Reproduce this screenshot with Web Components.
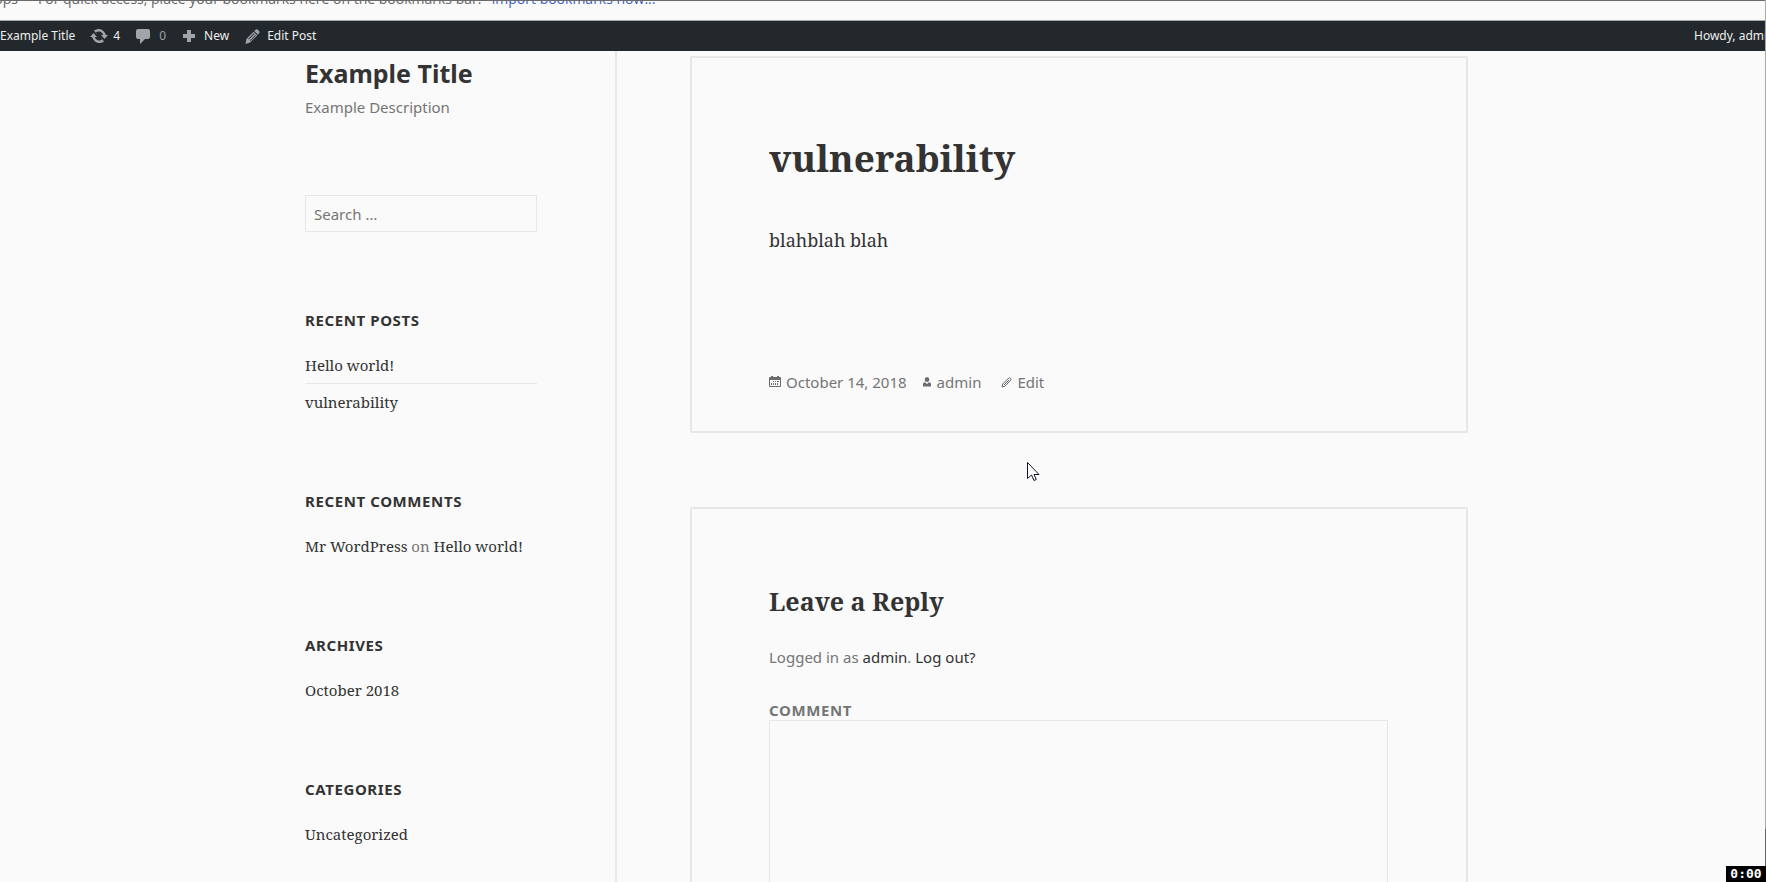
<!DOCTYPE html>
<html lang="en">
<head>
<meta charset="utf-8">
<title>vulnerability – Example Title</title>
<style>
html, body { margin: 0; height: 100%; }
body {
  --sans: "Noto Sans", "Open Sans", sans-serif;
  --serif: "Noto Serif", "Droid Serif", "DejaVu Serif", serif;
  --ink: #333; --muted: #757575; --line: #e7e7e7; --paper: #fafafa;
  background: var(--paper); color: var(--ink); font-family: var(--sans); overflow: hidden;
}
</style>
</head>
<body>
<blog-window></blog-window>
<script>
const define = (name, html) => {
  const t = document.createElement('template');
  t.innerHTML = '<style>*{box-sizing:border-box}a{color:inherit;text-decoration:none}svg{display:block;flex:none}</style>' + html;
  customElements.define(name, class extends HTMLElement {
    constructor() { super(); this.attachShadow({ mode: 'open' }).append(t.content.cloneNode(true)); }
  });
};

define('bookmarks-strip', `
<style>
:host{display:block;height:21px;box-sizing:border-box;overflow:hidden;border-top:1px solid #6b696a;border-bottom:1px solid #a9a9a9;font:14px/20px "Open Sans",sans-serif;color:#666}
p{margin:-12px 0 0;display:flex;white-space:nowrap}
.apps{width:38px;display:flex;justify-content:flex-end;padding-right:20px}
a{color:#3a5fc8;margin-left:10px}
</style>
<p><span class="apps">Apps</span><span>For quick access, place your bookmarks here on the bookmarks bar.</span><a href="#">Import bookmarks now...</a></p>`);

define('admin-bar', `
<style>
:host{display:flex;justify-content:space-between;height:30px;background:#23282d;color:#eee;font:12px/30px "Noto Sans",sans-serif;white-space:nowrap;overflow:hidden}
nav{display:flex}
a{display:flex;align-items:center}
.site{margin-right:15px}.upd{margin-right:16px;gap:5px}.com{margin-right:16px;gap:9px}.new{margin-right:16px;gap:8px}.edit{gap:7px}
.com span{color:#9ca1a6}
.me{width:72px;overflow:hidden}
svg{fill:#a0a5aa}
</style>
<nav aria-label="Toolbar">
<a class="site" href="#">Example Title</a>
<a class="upd" href="#"><svg width="18" height="16" viewBox="0 0 18 16"><path d="M4 2.600A7.200 7.200 0 0 1 14.700 4.500L16 7H18L14.500 11 11 7h2.200A4.800 4.800 0 0 0 6 4.300L7 6.500Z"/><path d="M14 13.400A7.200 7.200 0 0 1 3.300 11.500L2 9H0L3.500 5 7 9H4.800A4.800 4.800 0 0 0 12 11.700L11 9.500Z"/></svg>4</a>
<a class="com" href="#"><svg width="14" height="16" viewBox="0 0 14 16"><path d="M2 1h10q2 0 2 2v6q0 2-2 2H9l-5 5v-5H2q-2 0-2-2V3q0-2 2-2Z"/></svg><span>0</span></a>
<a class="new" href="#"><svg width="14" height="14" viewBox="0 0 14 14"><path d="M5 1h4v4h4v4H9v4H5V9H1V5h4Z"/></svg>New</a>
<a class="edit" href="#"><svg width="15" height="15" viewBox="0 0 15 15"><path fill-rule="evenodd" d="M9.200 2 11 .600q1-.7 1.900.1L14 1.900q1 .9.200 2L12.900 5.700ZM8.500 2.700 12.200 6.400 5 13.600 .500 15 1.400 10ZM8.800 4.300 3.200 9.900l.6.600 5.600-5.600ZM10.400 5.900 4.800 11.500l.5.500 5.600-5.600Z"/></svg>Edit Post</a>
</nav>
<a class="me" href="#">Howdy, admin</a>`);

define('site-branding', `
<style>
:host{display:block;padding-top:7px}
h1{margin:0;font-size:25px;line-height:30px;font-weight:700}
p{margin:7px 0 0;font-size:15px;line-height:24px;color:var(--muted)}
</style>
<h1><a href="#">Example Title</a></h1><p>Example Description</p>`);

define('search-box', `
<style>
:host{display:block}
input{display:block;width:100%;height:37px;margin:0;padding:0 8px;border:1px solid var(--line);border-radius:0;background:transparent;color:var(--ink);font:15px/24px var(--sans)}
input::placeholder{color:var(--muted);opacity:1}
</style>
<form role="search"><input type="search" aria-label="Search for:" placeholder="Search …"></form>`);

define('side-widget', `
<style>
:host{display:block}
h2{margin:0 0 17px;font-size:15px;line-height:20px;font-weight:700;letter-spacing:0.04em;text-transform:uppercase}
</style>
<h2><slot name="title"></slot></h2><slot></slot>`);

define('link-list', `
<style>
:host{display:block;font:15px/24px var(--serif);color:var(--muted)}
::slotted(div){padding:6px 0}
::slotted(div:not(:first-child)){border-top:1px solid var(--line)}
</style><slot></slot>`);

define('side-bar', `
<style>
:host{display:block;border-right:2px solid var(--line);padding-right:78px}
.inner{width:232px;margin-left:auto;display:flex;flex-direction:column}
search-box{margin:76px 0 78px}
side-widget{margin-bottom:71px}
.l a{color:var(--ink)}
</style>
<div class="inner">
<site-branding></site-branding><search-box></search-box>
<side-widget><span slot="title">Recent Posts</span><link-list class="l"><div><a href="#">Hello world!</a></div><div><a href="#">vulnerability</a></div></link-list></side-widget>
<side-widget><span slot="title">Recent Comments</span><link-list class="l"><div><a href="#">Mr WordPress</a> on <a href="#">Hello world!</a></div></link-list></side-widget>
<side-widget><span slot="title">Archives</span><link-list class="l"><div><a href="#">October 2018</a></div></link-list></side-widget>
<side-widget><span slot="title">Categories</span><link-list class="l"><div><a href="#">Uncategorized</a></div></link-list></side-widget>
</div>`);

define('content-card', `
<style>:host{display:block;border:2px solid var(--line);border-radius:2px;padding:76px 78px 0 77px}</style><slot></slot>`);

define('post-meta', `
<style>
:host{display:flex;font-size:15px;line-height:24px;color:var(--muted)}
a,time{display:flex;align-items:center;gap:5px}
time{margin-right:15px}.by{margin-right:20px}
svg{fill:#6c6c6c}
</style>
<time datetime="2018-10-14"><svg width="12" height="12" viewBox="0 0 12 12"><path fill-rule="evenodd" d="M1 1h1V0h2v1h4V0h2v1h1q1 0 1 1v8q0 1-1 1H1q-1 0-1-1V2q0-1 1-1ZM1 4v6h10V4ZM4 5h1v1H4ZM6 5h1v1H6ZM8 5h2v1H8ZM2 7h1v2H2ZM4 7h1v2H4ZM6 7h1v2H6ZM8 7h1v2H8Z"/></svg><a href="#">October 14, 2018</a></time>
<a class="by" href="#"><svg width="10" height="10" viewBox="0 0 10 10"><ellipse cx="5" cy="2.500" rx="2.300" ry="2.500"/><path d="M1 9.500V7q0-1.500 2-1.800L5 7l2-1.800Q9 5.500 9 7v2.500Z"/></svg>admin</a>
<a href="#"><svg width="11" height="11" viewBox="0 0 11 11"><path fill="none" stroke="#6c6c6c" d="M1 10 1.700 7 7.700 1Q8.700.300 9.500 1.300q1 .9.200 1.900L4 9.200ZM2.800 8.200 8.200 2.800"/></svg>Edit</a>`);

define('blog-post', `
<style>
:host{display:block}
h1{margin:0;font:700 37px/48px var(--serif)}
p{margin:42px 0 0;font:18px/32px var(--serif)}
post-meta{margin:114px 0 37px}
</style>
<content-card><h1>vulnerability</h1><p>blahblah blah</p><post-meta></post-meta></content-card>`);

define('reply-form', `
<style>
:host{display:block}
h2{margin:0;font:700 25px/32px var(--serif)}
p{margin:28px 0 31px;font-size:15px;line-height:24px;color:var(--muted)}
p a{color:var(--ink)}
label{display:block;font-size:15px;line-height:20px;font-weight:700;letter-spacing:0.04em;color:var(--muted);text-transform:uppercase}
textarea{display:block;width:100%;height:260px;margin:0;padding:8px;border:1px solid var(--line);border-radius:0;background:transparent;resize:none;font:16px/24px var(--sans)}
</style>
<content-card><h2>Leave a Reply</h2><p>Logged in as <a href="#">admin</a>. <a href="#">Log out?</a></p>
<form><label for="comment">Comment</label><textarea id="comment"></textarea></form></content-card>`);

define('mouse-pointer', `
<style>:host{display:block}</style>
<svg width="13" height="20" viewBox="0 0 13 20"><path fill="#fff" stroke="#14122b" d="M.5.500V16.500L4.500 13 7 18.500 9.300 17.500 7 12.500H12Z"/></svg>`);

define('time-counter', `
<style>:host{display:block;background:#000;color:#fff;font:700 13px/16px "DejaVu Sans Mono",monospace;text-align:center}</style>0:00`);

define('blog-window', `
<style>
:host{display:flex;flex-direction:column;height:100vh;position:relative;overflow:hidden;background:var(--paper)}
main{flex:1;min-height:0;display:grid;grid-template-columns:617fr 1149fr;overflow:hidden}
.content{width:min(100%,851px);padding:5px 0 0 73px}
reply-form{margin-top:74px}
.edge{position:absolute;top:0;right:0;bottom:0;width:1px;background:linear-gradient(#aaa 94%,#666 94%)}
mouse-pointer{position:absolute;left:1027px;top:462px}
time-counter{position:absolute;right:0;bottom:0;width:40px;height:16px}
</style>
<bookmarks-strip></bookmarks-strip><admin-bar></admin-bar>
<main><side-bar></side-bar><div class="content"><blog-post></blog-post><reply-form></reply-form></div></main>
<div class="edge"></div><mouse-pointer></mouse-pointer><time-counter></time-counter>`);
</script>
</body>
</html>
